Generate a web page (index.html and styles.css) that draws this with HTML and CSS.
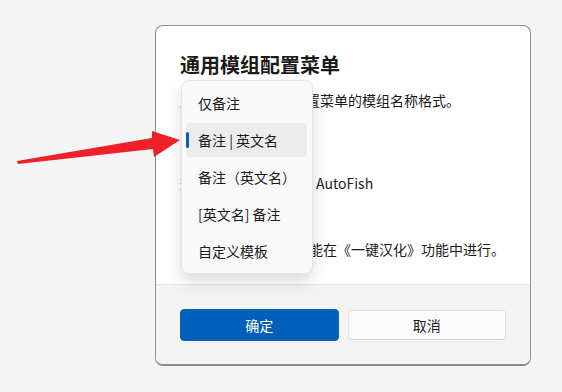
FILE: index.html
```html
<!DOCTYPE html>
<html lang="zh-CN">
<head>
    <meta charset="UTF-8">
    <meta name="viewport" content="width=device-width, initial-scale=1.0">
    <title>通用模组配置菜单</title>
    <link rel="stylesheet" href="styles.css">
</head>
<body>
    <div class="dialog">
        <div class="dialog-body">
            <h1>通用模组配置菜单</h1>
            <p class="desc">用于设置通用模组配置菜单的模组名称格式。</p>
            <div class="combo-slot"></div>
            <p class="preview">效果预览：自动钓鱼 | AutoFish</p>
            <p class="note">批量修改模组名称功能在《一键汉化》功能中进行。</p>
        </div>
        <div class="dialog-footer">
            <button class="btn btn-primary">确定</button>
            <button class="btn btn-secondary">取消</button>
        </div>

        <!-- 展开的下拉列表 -->
        <ul class="dropdown">
            <li>仅备注</li>
            <li class="selected">备注 | 英文名</li>
            <li>备注（英文名）</li>
            <li>[英文名] 备注</li>
            <li>自定义模板</li>
        </ul>
    </div>

    <svg class="arrow" width="190" height="170" viewBox="0 0 190 170">
        <polygon points="17,161 152,138 152,131 180,140 154,157 153,149 18,164" fill="#ee2128"/>
    </svg>
</body>
</html>
```

FILE: styles.css
```css
body {
    margin: 0;
    padding: 25px 0 0 155px;
    background-color: #f4f4f4;
    font-family: "Noto Sans CJK SC", "Noto Sans", sans-serif;
    color: #1b1b1b;
    height: 392px;
    box-sizing: border-box;
    overflow: hidden;
}
.dialog {
    position: relative;
    width: 376px;
    height: 341px;
    box-sizing: border-box;
    display: flex;
    flex-direction: column;
    background-color: #fff;
    border: 1px solid #8e8e8e;
    border-bottom: 2px solid #8a8a8a;
    border-radius: 8px;
    overflow: hidden;
}
.dialog-body {
    flex: 1;
    padding: 25px 24px 0 24px;
}
.dialog-body h1 {
    margin: 0;
    font-size: 20px;
    line-height: 28px;
    font-weight: 700;
}
.dialog-body p {
    margin: 0;
    font-size: 14px;
    line-height: 20px;
    white-space: nowrap;
}
.desc {
    margin-top: 11px !important;
}
.combo-slot {
    height: 32px;
    margin: 15px 0 16px;
}
.note {
    margin-top: 46px !important;
    text-indent: 3px;
}
.dialog-footer {
    display: flex;
    gap: 9px;
    padding: 24px 24px 23px 24px;
    background-color: #f3f3f3;
    border-top: 1px solid #e8e8e8;
}
.btn {
    flex: 1;
    height: 32px;
    font-family: inherit;
    font-size: 14px;
    border-radius: 4px;
}
.btn-primary {
    background-color: #005fb8;
    color: #fff;
    border: 1px solid #0a64b9;
}
.btn-secondary {
    background-color: #fbfbfb;
    color: #1b1b1b;
    border: 1px solid #e3e3e3;
    border-bottom-color: #d6d6d6;
    margin: 1px 0;
    height: 30px;
}
.dropdown {
    position: absolute;
    left: 25px;
    top: 54px;
    width: 132px;
    box-sizing: border-box;
    margin: 0;
    padding: 5px 5px 5px 4px;
    list-style: none;
    background-color: #f9f9f9;
    border: 1px solid #e4e4e4;
    border-radius: 8px;
    box-shadow: 0 8px 16px rgba(0, 0, 0, 0.14);
}
.dropdown li {
    position: relative;
    height: 34px;
    line-height: 34px;
    padding-left: 12px;
    margin-bottom: 3px;
    font-size: 14px;
    border-radius: 4px;
    white-space: nowrap;
}
.dropdown li:last-child {
    margin-bottom: 0;
}
.dropdown li.selected {
    background-color: #ececec;
}
.dropdown li.selected::before {
    content: "";
    position: absolute;
    left: 0;
    top: 9px;
    width: 3px;
    height: 16px;
    border-radius: 2px;
    background-color: #005fb8;
}
.arrow {
    position: absolute;
    left: 0;
    top: 0;
}
```
